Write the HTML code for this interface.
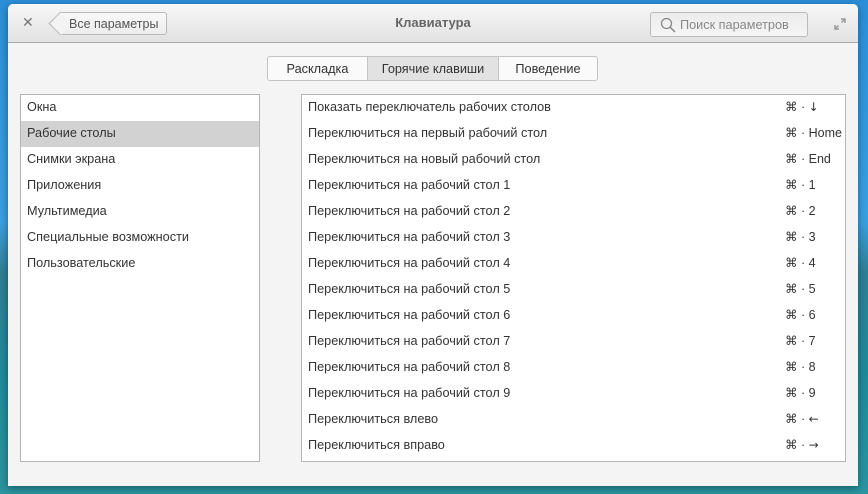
<!DOCTYPE html>
<html><head><meta charset="utf-8"><style>
*{margin:0;padding:0;box-sizing:border-box}
body{width:868px;height:494px;overflow:hidden;font-family:"Liberation Sans","DejaVu Sans",sans-serif;font-size:12.7px;color:#333;white-space:nowrap;
background:linear-gradient(180deg,#2a8fd8 0%,#3aa0e0 45%,#2f7f95 55%,#1f8a9a 75%,#2a95a0 100%);position:relative}
.win{position:absolute;left:8px;top:4px;width:850px;height:482px;background:#f4f4f4;border-radius:5px 5px 0 0;overflow:hidden;box-shadow:0 2px 8px rgba(0,0,0,.4)}
.hdr{height:39px;background:linear-gradient(#f7f7f7,#e2e2e2);border-bottom:1px solid #a9a9a9;position:relative}
.x{position:absolute;left:14px;top:10px;font-size:14px;color:#777;font-weight:bold}
.back{position:absolute;left:52px;top:8px;height:23px;width:107px;border:1px solid #b8b8b8;border-left:none;border-radius:0 3px 3px 0;background:linear-gradient(#f9f9f9,#ececec);font-size:12.5px;color:#555;padding:4px 0 0 9px}
.back:before{content:"";position:absolute;left:-8px;top:2px;width:16px;height:16px;border-left:1px solid #b8b8b8;border-bottom:1px solid #b8b8b8;transform:rotate(45deg);background:#f3f3f3}
.back span{position:relative}
.title{position:absolute;left:0;right:0;top:11px;text-align:center;font-weight:bold;color:#666;font-size:13px}
.search{position:absolute;left:642px;top:8px;width:158px;height:25px;border:1px solid #bbb;border-radius:3px;background:linear-gradient(#ececec,#f5f5f5);color:#888;padding:5px 0 0 29px}
.search svg{position:absolute;left:9px;top:4px}
.max{position:absolute;left:826px;top:14px}
.tabs{position:absolute;left:259px;top:52px;height:25px;display:flex;border:1px solid #c3c3c3;border-radius:3px;background:#fafafa}
.tabs div{padding:5px 0 0;text-align:center;height:23px}
.tabs .a{background:#e2e2e2;border-left:1px solid #c3c3c3;border-right:1px solid #c3c3c3}
.panel{position:absolute;top:90px;height:368px;background:#fff;border:1px solid #b5b5b5}
.row{height:26px;line-height:24px;padding-left:6px;position:relative}
.sel{background:#d2d2d2}
.k{position:absolute;right:0;left:483px;top:0;font-size:12.5px}
.ar{font-family:"DejaVu Sans",sans-serif;font-size:12px}
</style></head><body>
<div class="win">
<div class="hdr">
<div class="x">✕</div>
<div class="back"><span>Все параметры</span></div>
<div class="title">Клавиатура</div>
<div class="search"><svg width="16" height="16" viewBox="0 0 16 16"><circle cx="6.5" cy="6.5" r="5" fill="none" stroke="#888" stroke-width="1.3"/><path d="M10 10l5 5" stroke="#888" stroke-width="1.5"/></svg>Поиск параметров</div>
<svg class="max" width="12" height="12" viewBox="0 0 12 12"><path d="M7 1h4v4M11 1L7.5 4.5M5 11H1V7M1 11l3.5-3.5" stroke="#999" stroke-width="1.5" fill="none"/></svg>
</div>
<div class="tabs"><div style="width:99px">Раскладка</div><div class="a" style="width:132px">Горячие клавиши</div><div style="width:98px">Поведение</div></div>
<div class="panel" style="left:12px;width:240px">
<div class="row">Окна</div><div class="row sel">Рабочие столы</div><div class="row">Снимки экрана</div><div class="row">Приложения</div><div class="row">Мультимедиа</div><div class="row">Специальные возможности</div><div class="row">Пользовательские</div>
</div>
<div class="panel" style="left:293px;width:545px">
<div class="row">Показать переключатель рабочих столов<span class="k">⌘ · <span class="ar">↓</span></span></div>
<div class="row">Переключиться на первый рабочий стол<span class="k">⌘ · Home</span></div>
<div class="row">Переключиться на новый рабочий стол<span class="k">⌘ · End</span></div>
<div class="row">Переключиться на рабочий стол 1<span class="k">⌘ · 1</span></div>
<div class="row">Переключиться на рабочий стол 2<span class="k">⌘ · 2</span></div>
<div class="row">Переключиться на рабочий стол 3<span class="k">⌘ · 3</span></div>
<div class="row">Переключиться на рабочий стол 4<span class="k">⌘ · 4</span></div>
<div class="row">Переключиться на рабочий стол 5<span class="k">⌘ · 5</span></div>
<div class="row">Переключиться на рабочий стол 6<span class="k">⌘ · 6</span></div>
<div class="row">Переключиться на рабочий стол 7<span class="k">⌘ · 7</span></div>
<div class="row">Переключиться на рабочий стол 8<span class="k">⌘ · 8</span></div>
<div class="row">Переключиться на рабочий стол 9<span class="k">⌘ · 9</span></div>
<div class="row">Переключиться влево<span class="k">⌘ · <span class="ar">←</span></span></div>
<div class="row">Переключиться вправо<span class="k">⌘ · <span class="ar">→</span></span></div>
</div>
</div>
</body></html>
